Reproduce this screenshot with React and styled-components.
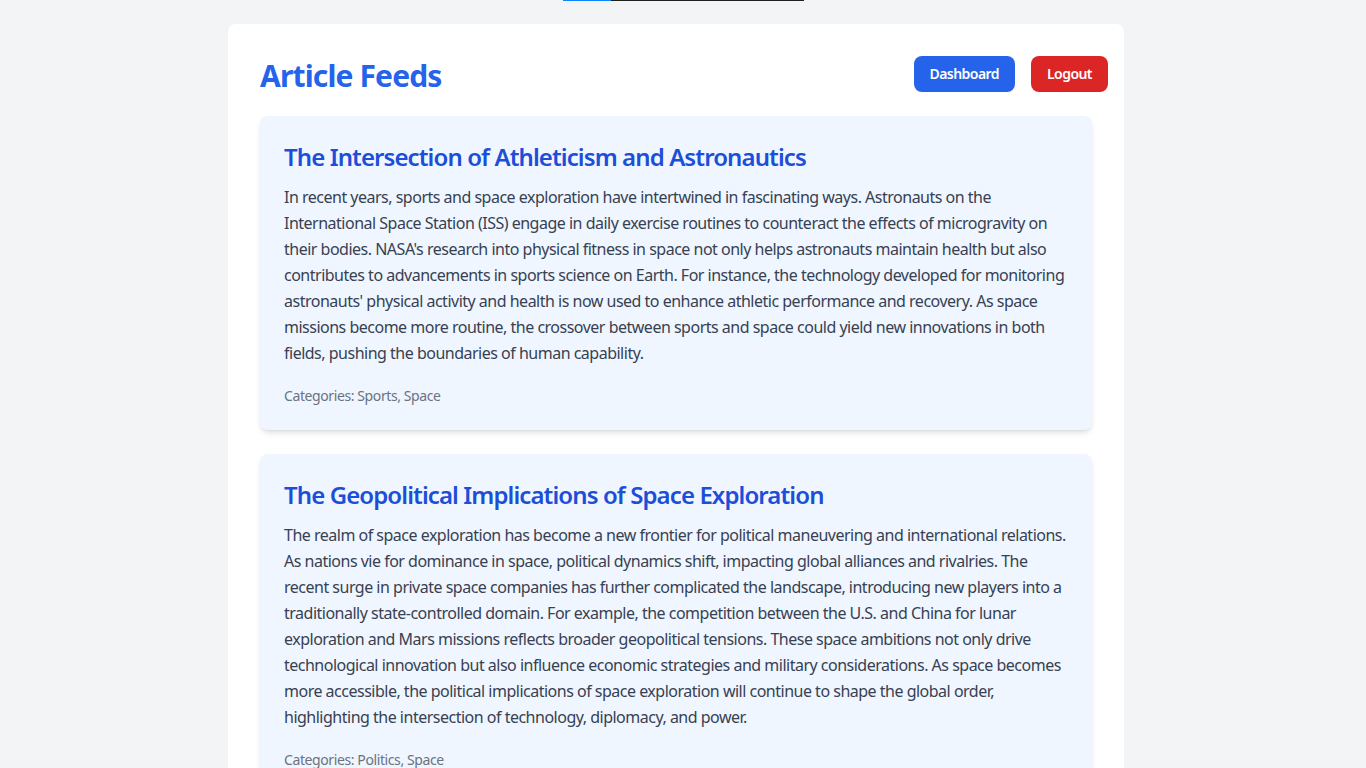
import React from "react"
import styled, { createGlobalStyle } from "styled-components"

const GlobalStyle = createGlobalStyle`
  html, body {
    margin: 0;
    padding: 0;
  }
  body {
    background: #f3f4f6;
    font-family: "Noto Sans", "Open Sans", sans-serif;
    color: #374151;
  }
  * {
    box-sizing: border-box;
  }
`

const articles = [
  {
    title: "The Intersection of Athleticism and Astronautics",
    body:
      "In recent years, sports and space exploration have intertwined in fascinating ways. Astronauts on the International Space Station (ISS) engage in daily exercise routines to counteract the effects of microgravity on their bodies. NASA's research into physical fitness in space not only helps astronauts maintain health but also contributes to advancements in sports science on Earth. For instance, the technology developed for monitoring astronauts' physical activity and health is now used to enhance athletic performance and recovery. As space missions become more routine, the crossover between sports and space could yield new innovations in both fields, pushing the boundaries of human capability.",
    categories: ["Sports", "Space"],
  },
  {
    title: "The Geopolitical Implications of Space Exploration",
    body:
      "The realm of space exploration has become a new frontier for political maneuvering and international relations. As nations vie for dominance in space, political dynamics shift, impacting global alliances and rivalries. The recent surge in private space companies has further complicated the landscape, introducing new players into a traditionally state-controlled domain. For example, the competition between the U.S. and China for lunar exploration and Mars missions reflects broader geopolitical tensions. These space ambitions not only drive technological innovation but also influence economic strategies and military considerations. As space becomes more accessible, the political implications of space exploration will continue to shape the global order, highlighting the intersection of technology, diplomacy, and power.",
    categories: ["Politics", "Space"],
  },
  {
    title: "How Data Analytics Is Changing Professional Sports",
    body:
      "Teams across every major league now rely on data to shape their decisions, from scouting and drafting to in-game strategy. Wearable sensors track player movement, heart rate and fatigue, giving coaches a detailed picture of each athlete's condition. Analysts use this information to reduce injuries and plan training loads more carefully. Fans benefit too, as broadcasters bring advanced statistics to the screen and make the game easier to understand. As the tools grow more powerful, the line between sport and science keeps getting thinner.",
    categories: ["Sports", "Technology"],
  },
  {
    title: "Climate Policy and the Race for Clean Energy",
    body:
      "Governments around the world are setting ambitious targets to cut emissions, and the debate over how to reach them has become central to national politics. Subsidies for solar and wind power, rules for electric vehicles and new carbon markets are reshaping whole industries. Critics warn about costs for households, while supporters point to new jobs and energy independence. The choices made in the coming decade will decide not only the health of the planet but also which economies lead the next industrial era.",
    categories: ["Politics", "Environment"],
  },
  {
    title: "Satellites That Watch Over Our Planet",
    body:
      "Thousands of satellites now orbit Earth, collecting images and measurements that help scientists follow storms, wildfires, crops and melting ice. Their data guides farmers, rescue teams and city planners every day. Smaller and cheaper satellites have made it possible for universities and start-ups to launch their own missions. With so many objects in orbit, however, the problem of space debris is growing, and agencies are searching for ways to keep the most useful orbits safe for the future.",
    categories: ["Space", "Science"],
  },
  {
    title: "The Rise of Esports on the Global Stage",
    body:
      "Competitive gaming has grown from small local tournaments into an industry watched by millions. Professional players train for hours each day, follow strict diets and work with coaches and psychologists, much like traditional athletes. Stadiums fill up for championship finals, and sponsors invest large sums in teams and leagues. Some countries now recognise esports as an official sport, and the discussion about including it in major multi-sport events continues to gain momentum.",
    categories: ["Sports", "Technology"],
  },
  {
    title: "Elections in the Age of Social Media",
    body:
      "Social platforms have changed how candidates speak to voters and how citizens follow political news. Campaigns can reach specific groups with tailored messages, and a single post can spread around the world within minutes. This openness gives new voices a chance to be heard, but it also makes it easier for false information to circulate. Lawmakers, platforms and researchers are still looking for the right balance between free expression and protecting the integrity of elections.",
    categories: ["Politics", "Technology"],
  },
]

const App = () => {
  return (
    <>
      <GlobalStyle />
      <TopStrip>
        <StripFill />
      </TopStrip>
      <Page>
        <Container>
          <Header>
            <Heading>Article Feeds</Heading>
            <Actions>
              <Button>Dashboard</Button>
              <Button variant="danger">Logout</Button>
            </Actions>
          </Header>
          <List>
            {articles.map((article) => (
              <Card key={article.title}>
                <CardTitle>{article.title}</CardTitle>
                <CardBody>{article.body}</CardBody>
                <Categories>
                  Categories: {article.categories.join(", ")}
                </Categories>
              </Card>
            ))}
          </List>
        </Container>
      </Page>
    </>
  )
}

export default App

const TopStrip = styled.div`
  position: fixed;
  top: 0;
  left: 563px;
  width: 241px;
  height: 1px;
  background: #1f1f1f;
  display: flex;
  z-index: 10;
`

const StripFill = styled.div`
  width: 48px;
  background: #0a84ff;
`

const Page = styled.div`
  min-height: 100vh;
  padding: 24px 17px 40px 3px;
`

const Container = styled.div`
  max-width: 896px;
  margin: 0 auto;
  background: #ffffff;
  border-radius: 8px;
  padding: 32px 16px 32px 32px;
`

const Header = styled.div`
  display: flex;
  align-items: center;
  justify-content: space-between;
  margin-bottom: 24px;
`

const Heading = styled.h1`
  margin: 0;
  font-size: 30px;
  line-height: 36px;
  padding-top: 2px;
  margin-bottom: -2px;
  font-weight: 700;
  letter-spacing: -0.85px;
  color: #2563eb;
`

const Actions = styled.div`
  display: flex;
  gap: 16px;
`

const Button = styled.button`
  border: none;
  border-radius: 8px;
  padding: 8px 16px;
  font-family: inherit;
  font-size: 14px;
  line-height: 20px;
  font-weight: 600;
  letter-spacing: -0.55px;
  color: #ffffff;
  cursor: pointer;
  background: ${(p) => (p.variant === "danger" ? "#dc2626" : "#2563eb")};
`

const List = styled.div`
  display: flex;
  flex-direction: column;
  gap: 24px;
  margin-right: 16px;
`

const Card = styled.article`
  background: #eff6ff;
  border-radius: 8px;
  padding: 24px;
  box-shadow: 0 4px 6px -1px rgba(0, 0, 0, 0.1), 0 2px 4px -2px rgba(0, 0, 0, 0.1);
`

const CardTitle = styled.h2`
  margin: 0 0 12px;
  padding-top: 1px;
  font-size: 24px;
  line-height: 31px;
  font-weight: 600;
  letter-spacing: -0.9px;
  color: #1d4ed8;
`

const CardBody = styled.p`
  margin: 0;
  font-size: 16px;
  line-height: 26px;
  letter-spacing: -0.5px;
  color: #374151;
`

const Categories = styled.p`
  margin: 20px 0 0;
  font-size: 14px;
  line-height: 20px;
  letter-spacing: -0.4px;
  color: #6b7280;
`
